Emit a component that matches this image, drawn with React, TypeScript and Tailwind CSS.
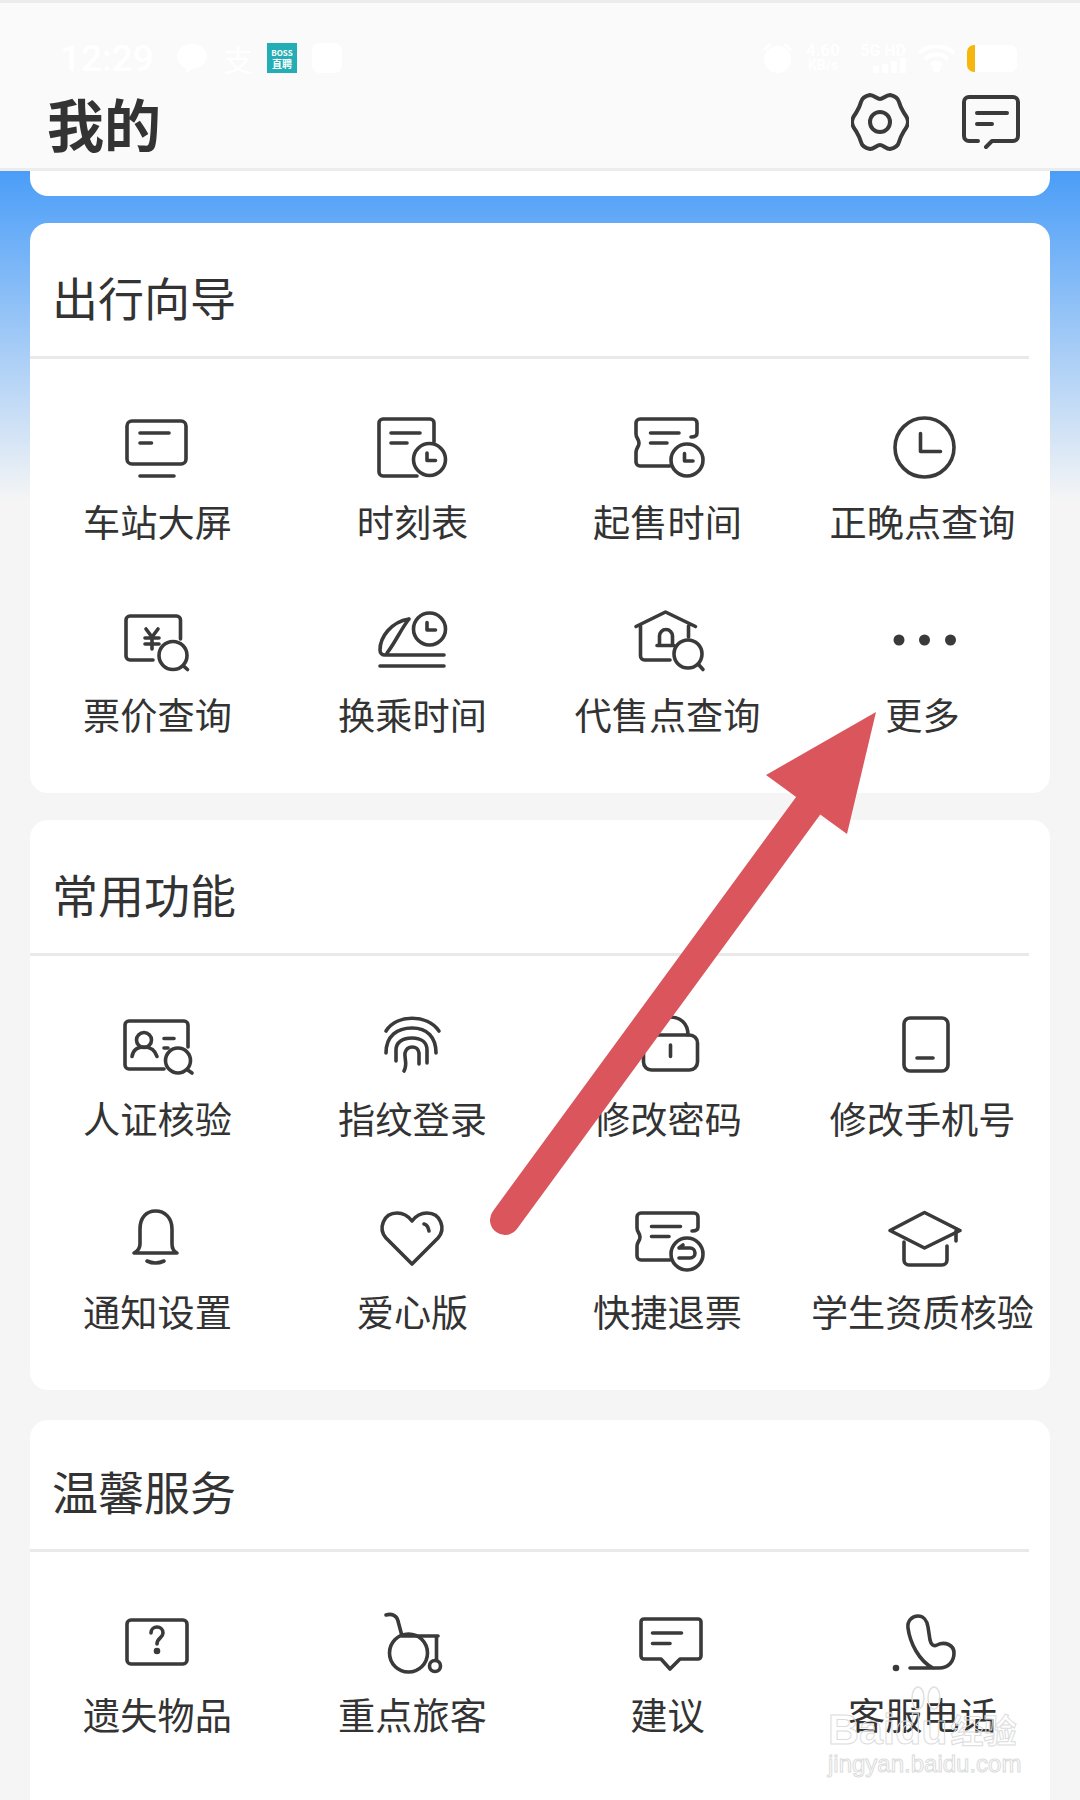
import type { ReactNode } from "react";

const FONT = "font-['Noto_Sans_CJK_SC','Noto_Sans',sans-serif]";

function Icon({ children }: { children: ReactNode }) {
  return (
    <svg
      width="72"
      height="72"
      viewBox="0 0 72 72"
      fill="none"
      stroke="#3a3a3a"
      strokeWidth="3.6"
      strokeLinecap="round"
      strokeLinejoin="round"
      className="overflow-visible"
    >
      {children}
    </svg>
  );
}

function Clock({ x, y, r = 16 }: { x: number; y: number; r?: number }) {
  return (
    <>
      <circle cx={x} cy={y} r={r} />
      <path d={`M${x - 2.5} ${y - 6.5}V${y + 1}H${x + 6}`} />
    </>
  );
}

function Lens({ x, y, r = 14, hx, hy }: { x: number; y: number; r?: number; hx: number; hy: number }) {
  return (
    <>
      <circle cx={x} cy={y} r={r} />
      <path d={`M${x + r * 0.72} ${y + r * 0.72}L${hx} ${hy}`} />
    </>
  );
}

const TICKET =
  "M59 25C63 25 65 24 65 21V11a4 4 0 0 0-4-4H8a4 4 0 0 0-4 4V22c0 4 3 5 3 9s-3 5-3 9V50a4 4 0 0 0 4 4H38";

const icons: Record<string, ReactNode> = {
  screen: (
    <Icon>
      <rect x="5" y="9" width="59" height="43" rx="5" />
      <path d="M18 21H47M18 31H29.5M18 64H52" />
    </Icon>
  ),
  timetable: (
    <Icon>
      <path d="M57 30V11a4 4 0 0 0-4-4H6a4 4 0 0 0-4 4V60a4 4 0 0 0 4 4H40" />
      <path d="M14 21H43M14 31H30" />
      <Clock x={52.5} y={47.5} />
    </Icon>
  ),
  saleTime: (
    <Icon>
      <path d={TICKET} />
      <path d="M18.5 21H47M18.5 31H35" />
      <Clock x={55} y={48} />
    </Icon>
  ),
  clock: (
    <Icon>
      <circle cx="37.5" cy="35.5" r="29.5" />
      <path d="M33.5 21.5V39.5H53.5" />
    </Icon>
  ),
  fare: (
    <Icon>
      <path d="M58.5 34V15a4 4 0 0 0-4-4H8a4 4 0 0 0-4 4V51a4 4 0 0 0 4 4H31" />
      <path d="M24 24L30 32L36 24M23 33H37M23 39H37M30 32V44" />
      <Lens x={51} y={50.5} hx={65.5} hy={64.5} />
    </Icon>
  ),
  transfer: (
    <Icon>
      <Clock x={52.5} y={24} />
      <path d="M32 14C14 17 3 32 3 45C3 48 5 50 8 50H67M32 14C24 24 18 38 10 48M3 61H67" />
    </Icon>
  ),
  agency: (
    <Icon>
      <path d="M4 21.5L33.5 7L63.5 21.5M8.5 21V51a4 4 0 0 0 4 4H38M56.5 21V32" />
      <path d="M27.5 40V31a6.5 6.5 0 0 1 13 0V40M25 40.5H42" />
      <Lens x={56} y={49} hx={71} hy={64.5} />
    </Icon>
  ),
  more: (
    <Icon>
      <g fill="#3a3a3a" stroke="none">
        <circle cx="12" cy="35" r="5.5" />
        <circle cx="37.5" cy="35" r="5.5" />
        <circle cx="63.5" cy="35" r="5.5" />
      </g>
    </Icon>
  ),
  idCheck: (
    <Icon>
      <path d="M66 38V16a4 4 0 0 0-4-4H7a4 4 0 0 0-4 4V56a4 4 0 0 0 4 4H42" />
      <circle cx="22" cy="31" r="7.5" />
      <path d="M10 47.5C11 41 15 38 22 38C29 38 33 41 35 47.5M42 29.5H52M42 39H46" />
      <Lens x={56} y={51.5} r={12.5} hx={70} hy={64} />
    </Icon>
  ),
  fingerprint: (
    <Icon>
      <path d="M9 22C20 5 50 5 62 22" />
      <path d="M9 44C9 27 20 19 35 19C50 19 59 28 59 44" />
      <path d="M19 52V41C19 33 26 29 35 29C45 29 50 34 50 41V54" />
      <path d="M27 62C31 55 27 49 28 44C30 36 41 36 42 44V55" />
    </Icon>
  ),
  lock: (
    <Icon>
      <rect x="11.5" y="26" width="54" height="35" rx="8" />
      <path d="M20 26C20 14 28 8 38 8C48 8 56 14 56 26M38.5 36V47.5" />
    </Icon>
  ),
  phone: (
    <Icon>
      <rect x="17" y="9" width="44" height="53" rx="6" />
      <path d="M30 49H46" />
    </Icon>
  ),
  bell: (
    <Icon>
      <path d="M12 51H55C51 49 50 46 50 42V27C50 16 43 9 33.5 9C24 9 18 16 18 27V42C18 46 16 49 12 51Z" />
      <path d="M25 59Q33.5 63 42 59" />
    </Icon>
  ),
  heart: (
    <Icon>
      <path d="M35 62L9 36C1 27 6 11 20 11C27 11 32 15 35 19C38 15 43 11 50 11C64 11 69 27 61 36Z" />
      <path d="M47 22Q51 23 52 29" />
    </Icon>
  ),
  refund: (
    <Icon>
      <path d="M60 29C64 29 66 28 66 25V15a4 4 0 0 0-4-4H9a4 4 0 0 0-4 4V26c0 4 3 5 3 9s-3 5-3 9V54a4 4 0 0 0 4 4H38" />
      <path d="M19.5 24.5H48.5M19.5 34.5H37" />
      <circle cx="55" cy="52" r="16" />
      <path d="M47 46H58a5 5 0 0 1 0 10H47M47 46L51 43" />
    </Icon>
  ),
  student: (
    <Icon>
      <path d="M37.5 10.5L3 28.5L37.5 46L73 28.5Z" />
      <path d="M17 40V58a5 5 0 0 0 5 5H55a5 5 0 0 0 5-5V44M69 29V39" />
    </Icon>
  ),
  lost: (
    <Icon>
      <rect x="5" y="15" width="60" height="44" rx="4" />
      <path d="M29 28C29 20 41 20 41 28C41 33 35 33 35 39" />
      <circle cx="35" cy="46" r="1.5" fill="#3a3a3a" />
    </Icon>
  ),
  wheelchair: (
    <Icon>
      <path d="M9 10C15 8 20 11 21 16L25 31H61M59.5 31V55" />
      <circle cx="31.5" cy="48" r="19" />
      <circle cx="58" cy="61" r="5.5" />
    </Icon>
  ),
  suggest: (
    <Icon>
      <path d="M12 14H66a3 3 0 0 1 3 3V51a3 3 0 0 1-3 3H48L38 64L29 54H12a3 3 0 0 1-3-3V17a3 3 0 0 1 3-3Z" />
      <path d="M20.5 28H49.5M20.5 38.5H38" />
    </Icon>
  ),
  service: (
    <Icon>
      <path d="M23 63H52C62 63 67 56 67 48C67 40 58 36 50 40C46 42 44 39 43 35L41 22C40 15 36 11 31 11C25 11 20 16 21 23C23 38 32 56 46 63" />
      <circle cx="9" cy="63" r="1.5" fill="#3a3a3a" />
    </Icon>
  ),
};

type Item = { label: string; icon: string };

const sections: { title: string; items: Item[] }[] = [
  {
    title: "出行向导",
    items: [
      { label: "车站大屏", icon: "screen" },
      { label: "时刻表", icon: "timetable" },
      { label: "起售时间", icon: "saleTime" },
      { label: "正晚点查询", icon: "clock" },
      { label: "票价查询", icon: "fare" },
      { label: "换乘时间", icon: "transfer" },
      { label: "代售点查询", icon: "agency" },
      { label: "更多", icon: "more" },
    ],
  },
  {
    title: "常用功能",
    items: [
      { label: "人证核验", icon: "idCheck" },
      { label: "指纹登录", icon: "fingerprint" },
      { label: "修改密码", icon: "lock" },
      { label: "修改手机号", icon: "phone" },
      { label: "通知设置", icon: "bell" },
      { label: "爱心版", icon: "heart" },
      { label: "快捷退票", icon: "refund" },
      { label: "学生资质核验", icon: "student" },
    ],
  },
  {
    title: "温馨服务",
    items: [
      { label: "遗失物品", icon: "lost" },
      { label: "重点旅客", icon: "wheelchair" },
      { label: "建议", icon: "suggest" },
      { label: "客服电话", icon: "service" },
    ],
  },
];

function Section({ title, items, last }: { title: string; items: Item[]; last?: boolean }) {
  return (
    <section className={`rounded-[18px] bg-white ${last ? "pb-[120px]" : "pb-[54px]"}`}>
      <div
        className={`mr-[21px] flex items-center border-b-[3px] border-[#e9e9e9] pl-[22px] text-[46px] leading-none text-[#333] ${
          last ? "h-[132px] pt-[10px]" : "h-[136px] pt-[12px]"
        }`}
      >
        {title}
      </div>
      <div className="mt-[53px] grid grid-cols-4 gap-y-[59px]">
        {items.map((item) => (
          <div key={item.label} className="flex flex-col items-center">
            {icons[item.icon]}
            <span className="mt-[12px] whitespace-nowrap text-[37.2px] leading-[50px] text-[#333]">
              {item.label}
            </span>
          </div>
        ))}
      </div>
    </section>
  );
}

function StatusBar() {
  return (
    <div className="flex h-[40px] items-center justify-between pl-[60px] pr-[63px] font-['Roboto',sans-serif] text-white">
      <div className="flex items-center">
        <span className="w-[93px] text-[37px] font-medium leading-none">12:29</span>
        <svg width="30" height="30" viewBox="0 0 30 30" fill="#fff" className="ml-[24px]">
          <path d="M15 1C7 1 0 6 0 13C0 19 4 23 9 25V30L15 26C23 26 30 20 30 13C30 6 23 1 15 1Z" />
        </svg>
        <span className={`ml-[16px] w-[30px] text-[30px] leading-none ${FONT}`}>支</span>
        <span className={`ml-[14px] flex h-[30px] w-[30px] flex-col items-center justify-center bg-[#22aeb4] text-[8px] font-bold leading-[11px] ${FONT}`}>
          <span>BOSS</span>
          <span className="text-[10px]">直聘</span>
        </span>
        <span className="ml-[15px] h-[30px] w-[30px] rounded-[8px] bg-white" />
      </div>
      <div className="flex items-center">
        <svg width="29" height="30" viewBox="0 0 29 30" fill="#fff">
          <circle cx="14.5" cy="16.5" r="13.5" />
          <path d="M0 6L6 0L8 2L2 8ZM29 6L23 0L21 2L27 8Z" />
        </svg>
        <span className="ml-[11px] flex w-[40px] flex-col items-center text-[17px] font-bold leading-[15px]">
          <span>4.60</span>
          <span className="text-[14px]">KB/s</span>
        </span>
        <span className="ml-[14px] flex w-[49px] flex-col items-end">
          <span className="whitespace-nowrap text-[16px] font-bold leading-[15px]">5G HD</span>
          <span className="flex h-[15px] items-end gap-[3px]">
            <span className="h-[7px] w-[6px] bg-white" />
            <span className="h-[9px] w-[6px] bg-white" />
            <span className="h-[12px] w-[6px] bg-white" />
            <span className="h-[15px] w-[6px] bg-white" />
          </span>
        </span>
        <svg width="37" height="27" viewBox="0 0 37 27" fill="none" stroke="#fff" strokeWidth="4" className="ml-[12px]">
          <path d="M1 8C10 -1 27 -1 36 8M7 14C13 8 24 8 30 14M13 20C16 17 21 17 24 20" />
          <circle cx="18.5" cy="24" r="2" fill="#fff" />
        </svg>
        <span className="ml-[12px] flex h-[27px] w-[50px] overflow-hidden rounded-[7px] bg-white">
          <span className="h-full w-[8px] bg-[#f7b60d]" />
        </span>
      </div>
    </div>
  );
}

export default function App() {
  return (
    <div className={`relative h-[1800px] w-[1080px] overflow-hidden bg-[#f5f5f5] ${FONT}`}>
      <header className="h-[171px] border-y-[3px] border-[#ececec] bg-[#fafafa] pt-[35px]">
        <StatusBar />
        <div className="flex items-center justify-between pl-[47px] pr-[60px] pt-[8px]">
          <h1 className="text-[57px] font-bold leading-[72px] text-[#333]">我的</h1>
          <div className="flex items-center gap-[53px]">
            <svg width="58" height="58" viewBox="0 0 58 58" fill="none" stroke="#3a3a3a" strokeWidth="4" strokeLinejoin="round">
              <path d="M29 6C32 6 35 2 39 2C44 3 47 5 48 9C49 13 50 15 53 20C56 24 57 27 57 29C57 31 56 34 53 38C50 43 49 45 48 49C47 53 44 55 39 56C35 56 32 52 29 52C26 52 23 56 19 56C14 55 11 53 10 49C9 45 8 43 5 38C2 34 1 31 1 29C1 27 2 24 5 20C8 15 9 13 10 9C11 5 14 3 19 2C23 2 26 6 29 6Z" />
              <circle cx="29" cy="29" r="10" />
            </svg>
            <svg width="58" height="56" viewBox="0 0 58 56" fill="none" stroke="#3a3a3a" strokeWidth="4" strokeLinecap="round" strokeLinejoin="round">
              <path d="M16 47H7a5 5 0 0 1-5-5V8a5 5 0 0 1 5-5H51a5 5 0 0 1 5 5V42a5 5 0 0 1-5 5H30L24 53" />
              <path d="M15 19H45M15 30H30" />
            </svg>
          </div>
        </div>
      </header>

      <main className="flex flex-col bg-[linear-gradient(#4a9df8_0px,#f5f5f5_330px)] px-[30px]">
        <div className="h-[25px] rounded-b-[18px] bg-white" />
        <div className="mt-[27px]">
          <Section {...sections[0]} />
        </div>
        <div className="mt-[27px]">
          <Section {...sections[1]} />
        </div>
        <div className="mt-[30px]">
          <Section {...sections[2]} last />
        </div>
      </main>

      <svg width="1080" height="1800" className="pointer-events-none absolute left-0 top-0" fill="#da555c">
        <path d="M505 1220L808 806" stroke="#da555c" strokeWidth="30" strokeLinecap="round" />
        <path d="M876 712L766 775L847 834Z" />
      </svg>

      {/* baidu jingyan watermark */}
      <div className="pointer-events-none absolute left-[828px] top-[1685px] w-[200px] text-transparent [-webkit-text-stroke:1px_#dcdcdc]">
        <svg width="36" height="26" viewBox="0 0 36 26" fill="none" stroke="#e0e0e0" strokeWidth="1.5" className="ml-[80px]">
          <ellipse cx="10" cy="13" rx="6" ry="11" />
          <ellipse cx="26" cy="13" rx="6" ry="11" />
        </svg>
        <div className="flex items-center">
          <span className="font-['Liberation_Sans',sans-serif] text-[43px] font-bold leading-[36px]">Baidu</span>
          <span className="ml-[3px] text-[33px] font-bold leading-[36px]">经验</span>
        </div>
        <div className="mt-[4px] font-['Liberation_Sans',sans-serif] text-[24px] leading-[26px]">jingyan.baidu.com</div>
      </div>
    </div>
  );
}
